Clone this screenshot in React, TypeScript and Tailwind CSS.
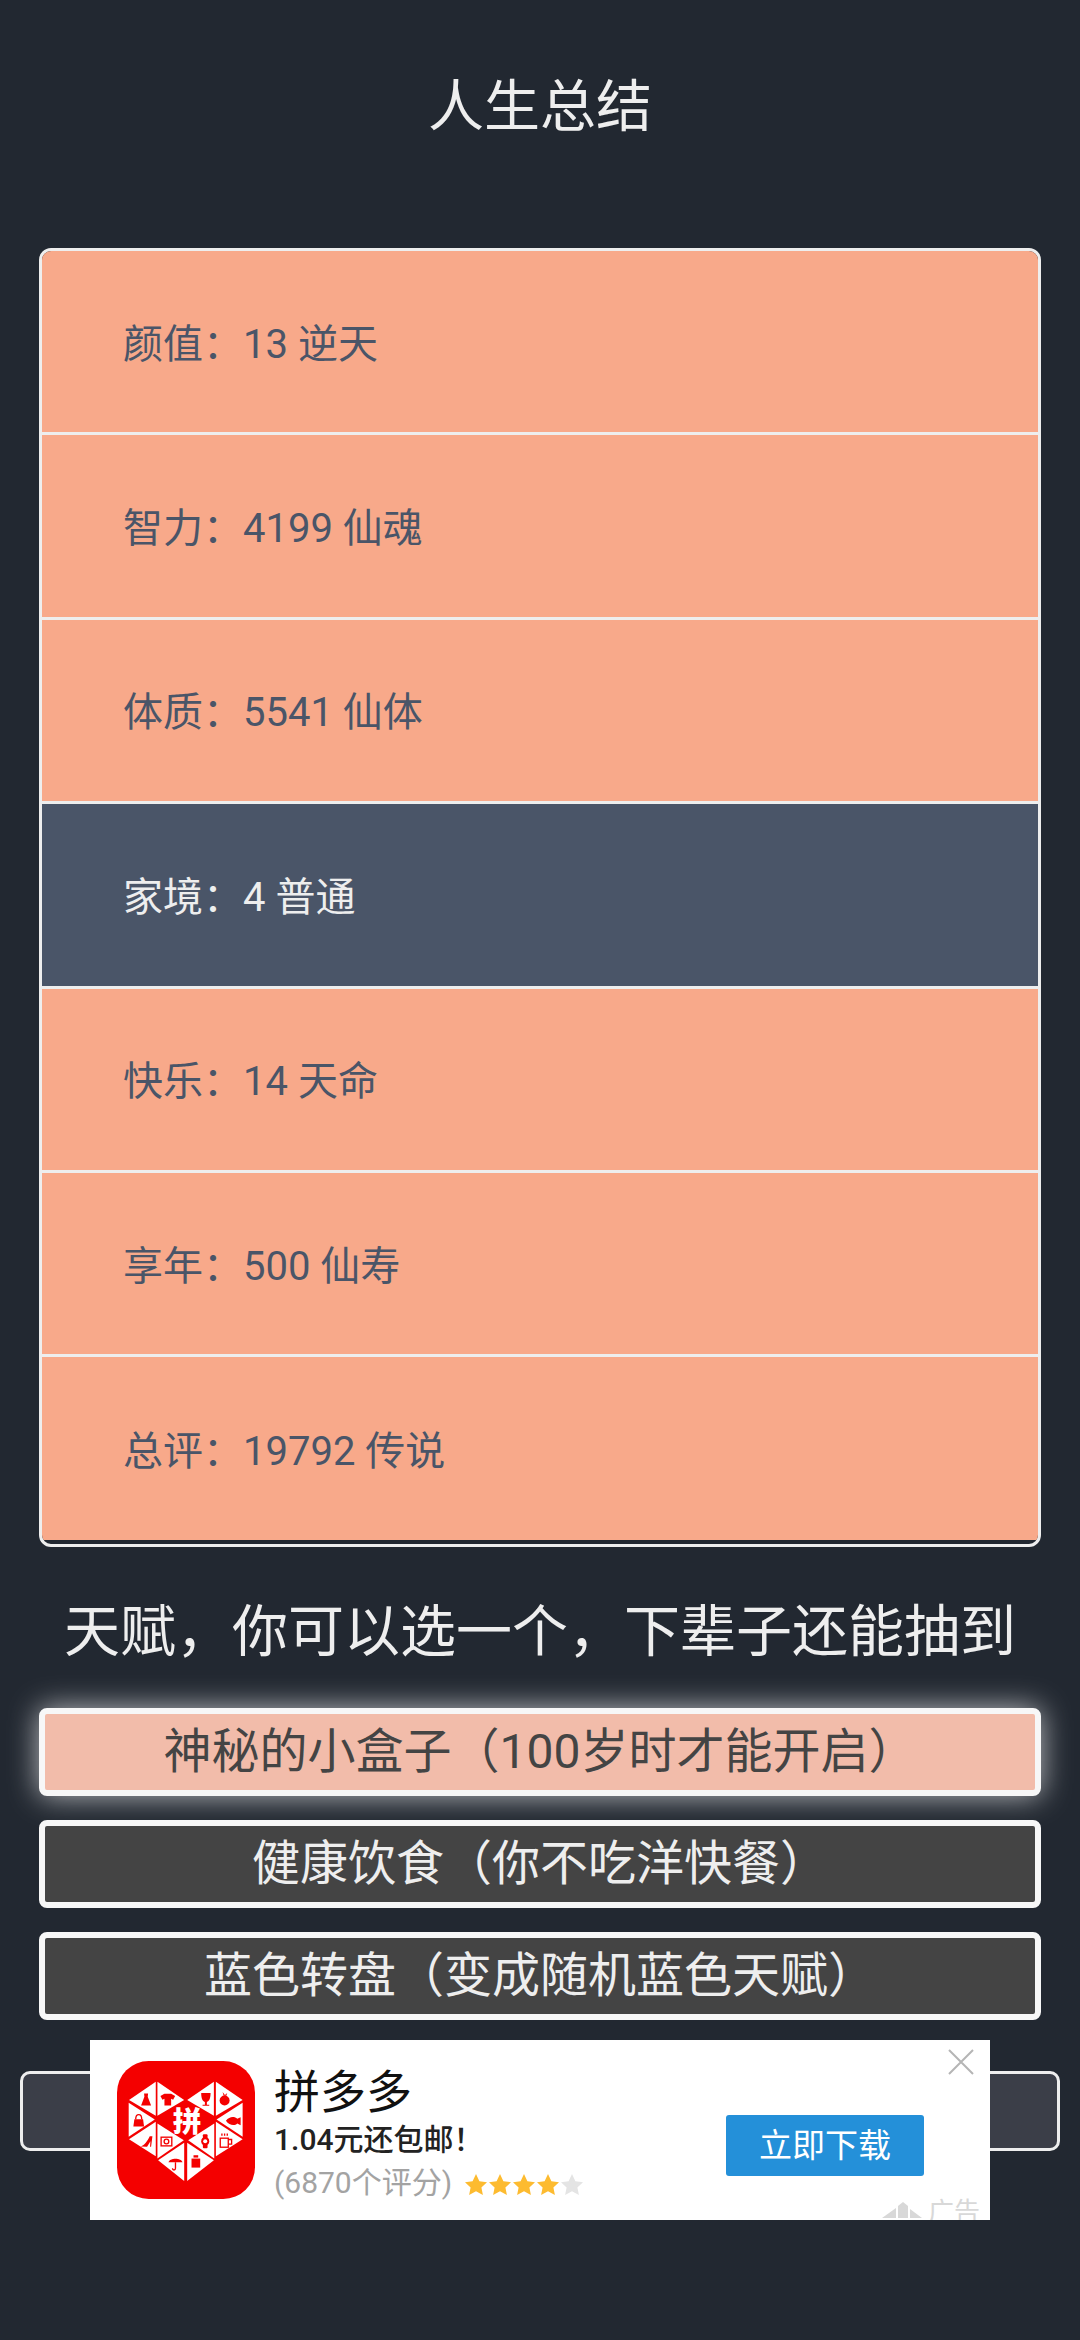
const rows = [
  { label: '颜值：13 逆天' },
  { label: '智力：4199 仙魂' },
  { label: '体质：5541 仙体' },
  { label: '家境：4 普通', dark: true },
  { label: '快乐：14 天命' },
  { label: '享年：500 仙寿' },
  { label: '总评：19792 传说' },
];

const talents = [
  { label: '神秘的小盒子（100岁时才能开启）', selected: true },
  { label: '健康饮食（你不吃洋快餐）' },
  { label: '蓝色转盘（变成随机蓝色天赋）' },
];

function PddLogo() {
  return (
    <svg viewBox="52 33 413 413" className="w-[138px] h-[138px] shrink-0">
      <rect x="52" y="33" width="413" height="413" rx="95" fill="#f40000" />
      <g fill="#ffffff">
        <polygon points="168,95 88,150 168,197" />
        <polygon points="173,95 253,150 173,197" />
        <polygon points="342,95 262,150 342,197" />
        <polygon points="348,95 428,150 348,197" />
        <polygon points="87,158 87,260 165,208" />
        <polygon points="428,158 428,260 350,208" />
        <polygon points="88,267 168,215 168,318" />
        <polygon points="173,220 173,325 252,270" />
        <polygon points="343,220 343,325 265,270" />
        <polygon points="348,215 348,318 428,267" />
        <polygon points="175,330 253,278 253,392" />
        <polygon points="262,278 262,392 342,330" />
        <text x="262" y="246" textAnchor="middle" fontSize="86" fontWeight="900" fontFamily="'Noto Sans CJK SC', sans-serif">拼</text>
      </g>
      <g fill="#f40000">
        {/* dress */}
        <path d="M133 130h12l-1 10 10 26h-30l10-26z" />
        {/* shirt */}
        <path d="M182 138l12-7h20l12 7-6 11-6-3v20h-20v-20l-6 3z" />
        {/* glass */}
        <path d="M304 129h28c0 16-4 24-11 27v8h7v3h-20v-3h7v-8c-7-3-11-11-11-27z" />
        {/* fruit */}
        <circle cx="374" cy="151" r="15" />
        <path d="M368 126l7 9 7-6-3 8h-8z" />
        {/* bag */}
        <path d="M104 207h26l3 22h-32z" />
        <path d="M108 207c0-18 18-18 18 0" fill="none" stroke="#f40000" strokeWidth="4" />
        {/* fish */}
        <path d="M378 212c10-14 26-14 34-6l10-5v24l-10-5c-8 8-24 6-34-8z" />
        {/* shoe */}
        <path d="M122 289c12-3 20-15 28-31h8l-4 32h-3l1-17-10 17z" />
        {/* watch */}
        <rect x="309" y="252" width="14" height="42" rx="3" />
        <circle cx="316" cy="273" r="12" />
        <circle cx="316" cy="273" r="6" fill="#ffffff" />
        {/* umbrella */}
        <path d="M206 336c4-14 38-14 42 0z" />
        <path d="M227 336v18c0 7-9 7-9 0" fill="none" stroke="#f40000" strokeWidth="4" />
        {/* jar */}
        <rect x="275" y="325" width="26" height="27" />
        <rect x="281" y="315" width="14" height="7" />
      </g>
      <g fill="none" stroke="#f40000" strokeWidth="4">
        {/* camera */}
        <rect x="184" y="261" width="32" height="26" />
        <circle cx="200" cy="274" r="7" />
        {/* cup */}
        <rect x="361" y="264" width="24" height="27" />
        <path d="M385 268h10v14h-10" />
        <path d="M366 257v-7M374 257v-7M382 257v-7" />
      </g>
    </svg>
  );
}

function Star({ filled }: { filled: boolean }) {
  return (
    <svg viewBox="0 0 24 24" className="w-[24px] h-[24px]">
      <path
        d="M12 1l3.4 7.2 7.6 1-5.6 5.3 1.5 7.6L12 18.3 5.1 22.100l1.500-7.600L1 9.200l7.600-1z"
        fill={filled ? '#fdbb30' : '#e4e4e4'}
      />
    </svg>
  );
}

export default function App() {
  return (
    <main
      className="relative h-[2340px] bg-[#222831] overflow-hidden"
      style={{ fontFamily: "Roboto, 'Noto Sans CJK SC', sans-serif" }}
    >
      <h1 className="pt-[72px] h-[248px] text-center text-[56px] leading-[70px] text-[#eeeeee]">人生总结</h1>

      {/* 属性列表 */}
      <div className="mx-[39px] h-[1299px] border-[3px] border-[#eeeeee] rounded-[12px] overflow-hidden bg-[#222831]">
        {rows.map((row) => (
          <div
            key={row.label}
            className={`h-[184.4px] last:h-[183px] pl-[81px] pt-[6px] flex items-center text-[40px] border-b-[3px] last:border-b-0 border-[#eeeeee] ${
              row.dark ? 'bg-[#4a5568] text-[#eeeeee]' : 'bg-[#f8a98a] text-[#4a5568]'
            }`}
          >
            {row.label}
          </div>
        ))}
      </div>

      <h2 className="mt-[50px] text-center text-[56px] leading-[70px] text-[#eeeeee]">
        天赋，你可以选一个，下辈子还能抽到
      </h2>

      {/* 天赋 */}
      <div className="mt-[41px] mx-[39px] flex flex-col gap-[24px]">
        {talents.map((t) => (
          <div
            key={t.label}
            className={`h-[88px] flex items-center justify-center border-[6px] border-[#f7f7f7] rounded-[8px] text-[48px] ${
              t.selected
                ? 'bg-[#f2bcaa] text-[#444444] shadow-[0_0_30px_rgba(255,255,255,0.7)]'
                : 'bg-[#444444] text-[#eeeeee]'
            }`}
          >
            {t.label}
          </div>
        ))}
      </div>

      <div className="mt-[51px] mx-[20px] h-[80px] border-[3px] border-[#eeeeee] rounded-[10px] bg-[#3b3e48]" />

      {/* 广告 */}
      <div className="absolute left-[90px] top-[2040px] w-[900px] h-[180px] bg-white overflow-hidden flex items-center pl-[27px]">
        <PddLogo />
        <div className="ml-[19px] self-start mt-[27px] flex flex-col">
          <div className="text-[46px] leading-[50px] text-[#111111]">拼多多</div>
          <div className="mt-[3px] text-[30px] leading-[40px] font-medium text-[#222222]">1.04元还包邮！</div>
          <div className="mt-[3px] flex items-center text-[30px] leading-[40px] text-[#a3a3a3]">
            (6870个评分)
            <span className="ml-[12px] mt-[4px] flex">
              <Star filled />
              <Star filled />
              <Star filled />
              <Star filled />
              <Star filled={false} />
            </span>
          </div>
        </div>
        <button className="absolute left-[636px] top-[75px] w-[198px] h-[61px] rounded-[3px] bg-[#2490d9] text-white text-[33px]">
          立即下载
        </button>
        <svg viewBox="0 0 26 26" className="absolute left-[858px] top-[9px] w-[26px] h-[26px]">
          <path d="M1 1l24 24M25 1L1 25" stroke="#b5b5b5" strokeWidth="2" fill="none" />
        </svg>
        <div className="absolute left-[792px] top-[157px] flex items-center text-[26px] leading-[30px] text-[#d8d8d8]">
          <svg viewBox="0 0 40 18" className="w-[40px] h-[18px] mr-[6px] mt-[-4px]">
            <path d="M0 17L14 7v10zM16 5l5-4 5 4v12H16zM28 8l12 9H28z" fill="#d8d8d8" />
          </svg>
          广告
        </div>
      </div>
    </main>
  );
}
